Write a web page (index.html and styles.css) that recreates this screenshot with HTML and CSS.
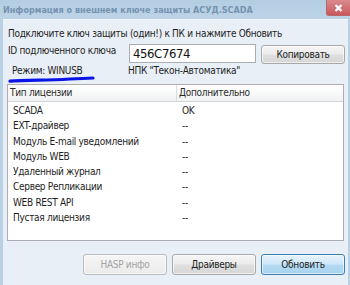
FILE: index.html
```html
<!DOCTYPE html>
<html lang="ru">
<head>
<meta charset="utf-8">
<link rel="stylesheet" href="styles.css">
</head>
<body>
<div class="window">
  <div class="titlebar">
    <span class="title">Информация о внешнем ключе защиты АСУД.SCADA</span>
    <span class="close"><svg width="9" height="8" viewBox="0 0 9 8"><path d="M1.5 1 L7.5 7 M7.5 1 L1.5 7" stroke="#fff" stroke-width="2.2"/></svg></span>
  </div>
  <div class="client">
    <div class="hint">Подключите ключ защиты (один!) к ПК и нажмите Обновить</div>
    <div class="idrow">
      <span class="idlabel">ID подлюченного ключа</span>
      <div class="input">456C7674</div>
      <button class="btn copy">Копировать</button>
    </div>
    <div class="moderow">
      <span class="mode">Режим: WINUSB</span>
      <span class="vendor">НПК "Текон-Автоматика"</span>
      <svg class="scribble" width="100" height="10" viewBox="0 0 100 10"><path d="M3 6.2 C 25 5.2, 55 4.8, 86 3" stroke="#0a14e6" stroke-width="3.2" fill="none" stroke-linecap="round"/></svg>
    </div>
    <div class="list">
      <div class="lhead">
        <div class="c1">Тип лицензии</div>
        <div class="c2">Дополнительно</div>
      </div>
      <div class="rows">
        <div class="row"><span class="c1">SCADA</span><span class="c2">OK</span></div>
        <div class="row"><span class="c1">EXT-драйвер</span><span class="c2">--</span></div>
        <div class="row"><span class="c1">Модуль E-mail уведомлений</span><span class="c2">--</span></div>
        <div class="row"><span class="c1">Модуль WEB</span><span class="c2">--</span></div>
        <div class="row"><span class="c1">Удаленный журнал</span><span class="c2">--</span></div>
        <div class="row"><span class="c1">Сервер Репликации</span><span class="c2">--</span></div>
        <div class="row"><span class="c1">WEB REST API</span><span class="c2">--</span></div>
        <div class="row"><span class="c1">Пустая лицензия</span><span class="c2">--</span></div>
      </div>
    </div>
    <div class="actions">
      <button class="btn disabled">HASP инфо</button>
      <button class="btn">Драйверы</button>
      <button class="btn primary">Обновить</button>
    </div>
  </div>
</div>
</body>
</html>
```

FILE: styles.css
```css
html, body {
  margin: 0;
  padding: 0;
}
body {
  width: 350px;
  height: 285px;
  overflow: hidden;
  font-family: "DejaVu Sans Condensed", "DejaVu Sans", sans-serif;
  font-stretch: semi-condensed;
  font-size: 10px;
  letter-spacing: -0.3px;
  color: #1e1e1e;
}
.window {
  width: 350px;
  height: 285px;
  background: #b9d1e5;
  display: flex;
  flex-direction: column;
}
.titlebar {
  height: 18px;
  display: flex;
  align-items: flex-start;
  background: linear-gradient(#b3cde2, #bdd4e7);
}
.title {
  font-weight: bold;
  color: #7593b0;
  font-size: 9px;
  letter-spacing: 0;
  line-height: 12px;
  padding: 4px 0 0 3px;
  white-space: nowrap;
}
.close {
  margin-left: auto;
  width: 23px;
  height: 15px;
  background: linear-gradient(#d98a8d, #c9585d);
  border-left: 1px solid #b8676a;
  border-bottom: 1px solid #b8676a;
  border-bottom-left-radius: 3px;
  display: flex;
  align-items: center;
  justify-content: center;
}
.client {
  flex: 1;
  margin: 1px 2px 0 3px;
  background: #e9eff6;
  border-top: 1px solid #f3f7fb;
  padding: 0 3px 0 4px;
}
.hint {
  margin: 7px 0 0 1px;
  height: 14px;
  line-height: 14px;
  white-space: nowrap;
}
.idrow {
  display: flex;
  align-items: flex-start;
  height: 20px;
  margin-top: 3px;
}
.idlabel {
  flex: none;
  width: 121px;
  padding: 0 0 0 1px;
  line-height: 14px;
  white-space: nowrap;
  overflow: hidden;
}
.input {
  flex: none;
  width: 122px;
  height: 17px;
  border: 1px solid #abadb3;
  background: #fff;
  font-size: 13px;
  letter-spacing: -0.4px;
  line-height: 17px;
  padding-left: 3px;
  color: #111;
}
.btn {
  flex: none;
  font-family: inherit;
  font-stretch: inherit;
  font-size: 10px;
  letter-spacing: -0.3px;
  color: #1e1e1e;
  height: 20px;
  width: 84px;
  border: 1px solid #a7a9ac;
  border-radius: 3px;
  background: linear-gradient(#f6f6f6 0%, #ececec 45%, #dfdfdf 55%, #d6d6d6 100%);
  padding: 0;
  box-shadow: inset 0 0 0 1px rgba(255,255,255,0.6);
}
.copy {
  margin-left: 5px;
  height: 19px;
  margin-top: 1px;
}
.moderow {
  display: flex;
  height: 18px;
  line-height: 14px;
  position: relative;
  white-space: nowrap;
}
.mode {
  flex: none;
  width: 116px;
  padding-left: 5px;
}
.scribble {
  position: absolute;
  left: 0;
  top: 11px;
}
.list {
  margin: 2px 1px 0 0;
  height: 155px;
  border: 1px solid #abadb3;
  background: #fff;
  display: flex;
  flex-direction: column;
}
.lhead {
  display: flex;
  height: 16px;
  line-height: 16px;
  background: linear-gradient(#ffffff, #f1f2f3);
  border-bottom: 1px solid #d5d5d5;
  color: #2a2a2a;
}
.lhead .c1 {
  flex: none;
  width: 166px;
  padding-left: 2px;
  border-right: 1px solid #dcdcdc;
}
.lhead .c2 {
  padding-left: 2px;
}
.rows {
  padding-top: 1px;
}
.row {
  display: flex;
  height: 15.3px;
  line-height: 15px;
  white-space: nowrap;
}
.row .c1 {
  flex: none;
  width: 169px;
  padding-left: 5px;
}
.actions {
  display: flex;
  justify-content: flex-end;
  gap: 5px;
  margin-top: 13px;
}
.actions .btn {
  height: 21px;
}
.disabled {
  color: #a3a3a3;
  border-color: #b9bcbe;
  background: linear-gradient(#f5f5f5, #ececec);
}
.primary {
  border-color: #3c7fb1;
  background: linear-gradient(#e7f3fb 0%, #cfe7f7 45%, #b4daf3 55%, #a8d2ee 100%);
}
```
